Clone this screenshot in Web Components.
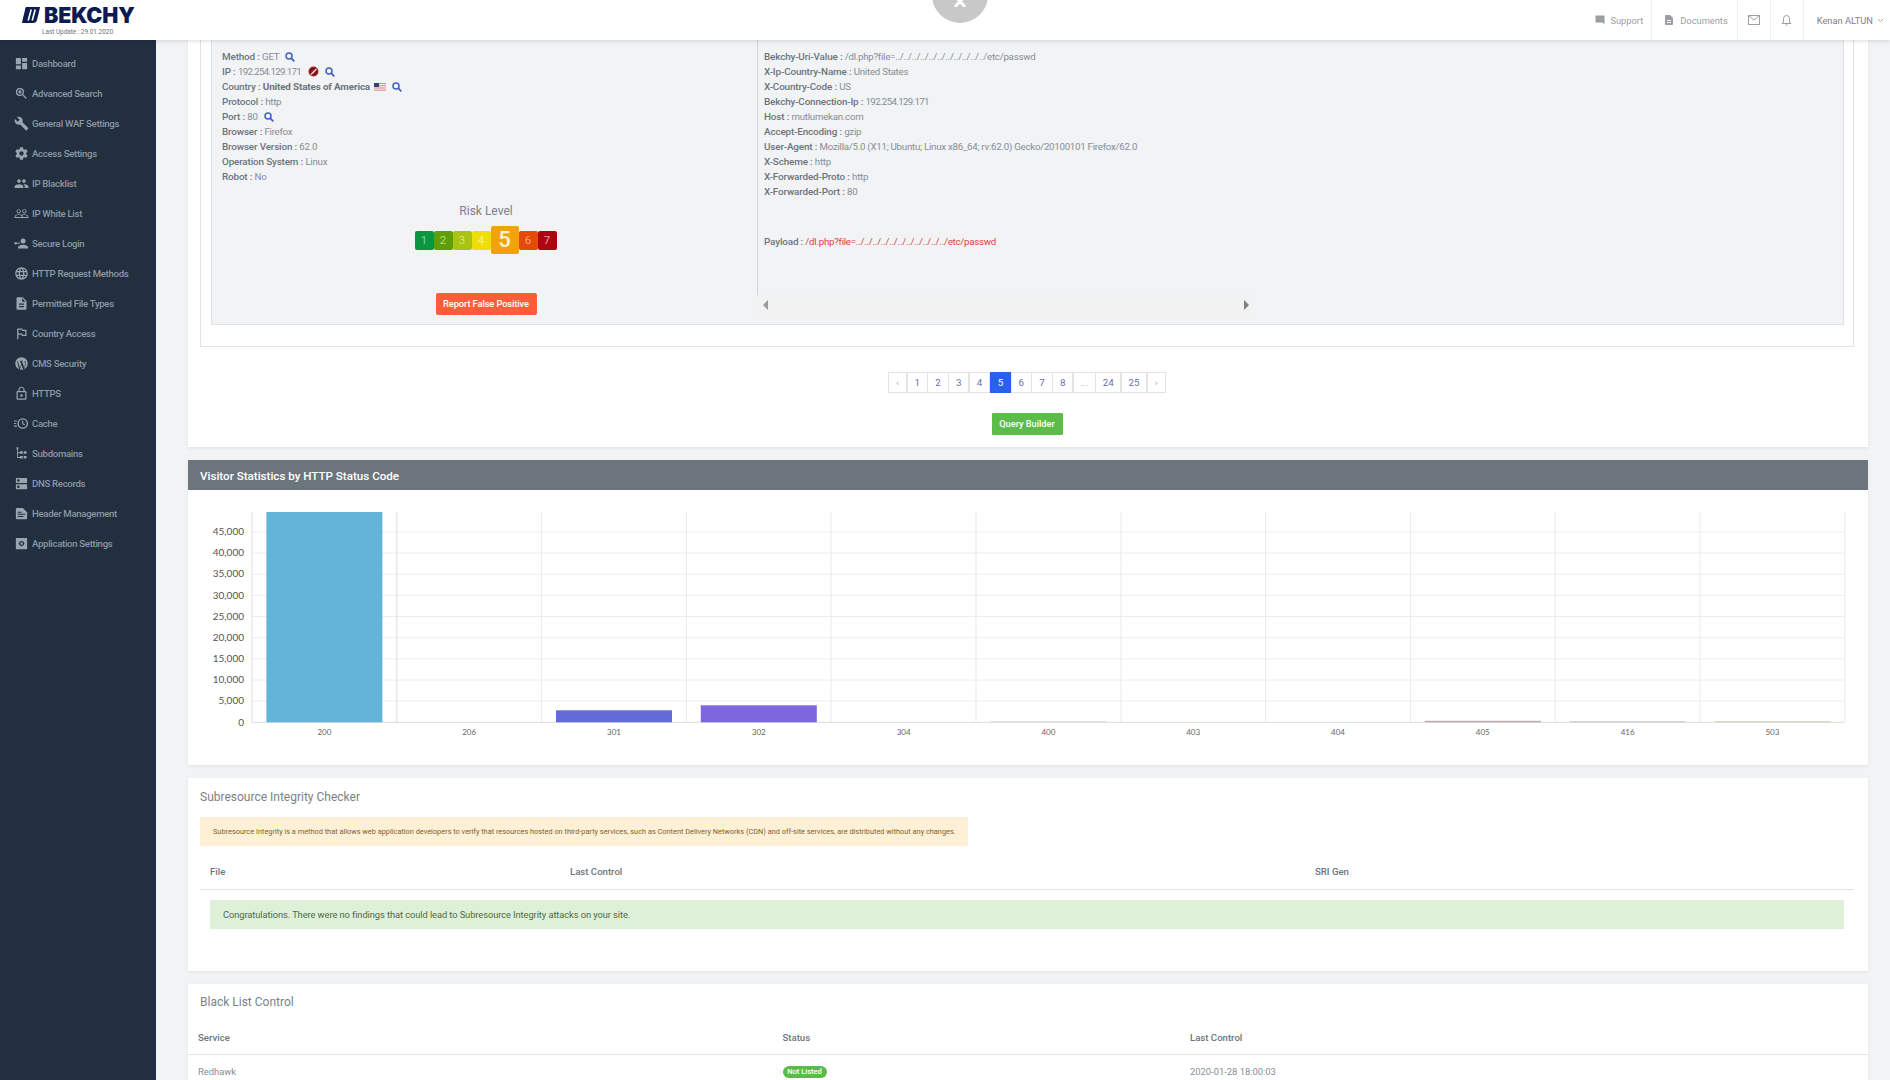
<!DOCTYPE html>
<html lang="en">
<head>
<meta charset="utf-8">
<title>Bekchy</title>
<style>
    html, body { margin: 0; height: 1080px; overflow: hidden; background: #f1f3f5; }
    body { font-family: Roboto, "Liberation Sans", sans-serif; font-size: 10px; color: #6c757d; }
</style>
</head>
<body>
<bk-app>
    <bk-header slot="header"></bk-header>
    <bk-sidebar slot="sidebar">
        <bk-nav icon="dashboard">Dashboard</bk-nav>
        <bk-nav icon="zoom">Advanced Search</bk-nav>
        <bk-nav icon="wrench">General WAF Settings</bk-nav>
        <bk-nav icon="gear">Access Settings</bk-nav>
        <bk-nav icon="people">IP Blacklist</bk-nav>
        <bk-nav icon="peopleo">IP White List</bk-nav>
        <bk-nav icon="keyuser">Secure Login</bk-nav>
        <bk-nav icon="globe">HTTP Request Methods</bk-nav>
        <bk-nav icon="file">Permitted File Types</bk-nav>
        <bk-nav icon="flag">Country Access</bk-nav>
        <bk-nav icon="wp">CMS Security</bk-nav>
        <bk-nav icon="lock">HTTPS</bk-nav>
        <bk-nav icon="cache">Cache</bk-nav>
        <bk-nav icon="tree">Subdomains</bk-nav>
        <bk-nav icon="dns">DNS Records</bk-nav>
        <bk-nav icon="doc">Header Management</bk-nav>
        <bk-nav icon="appgear">Application Settings</bk-nav>
    </bk-sidebar>

    <bk-log-card>
        <bk-row label="Method" value="GET"><bk-mark kind="search"></bk-mark></bk-row>
        <bk-row label="IP" value="192.254.129.171" tight><bk-mark kind="threat"></bk-mark><bk-mark kind="search"></bk-mark></bk-row>
        <bk-row label="Country" value="United States of America" strong><bk-mark kind="flag"></bk-mark><bk-mark kind="search"></bk-mark></bk-row>
        <bk-row label="Protocol" value="http"></bk-row>
        <bk-row label="Port" value="80"><bk-mark kind="search"></bk-mark></bk-row>
        <bk-row label="Browser" value="Firefox"></bk-row>
        <bk-row label="Browser Version" value="62.0"></bk-row>
        <bk-row label="Operation System" value="Linux"></bk-row>
        <bk-row label="Robot" value="No"></bk-row>

        <bk-row slot="headers" label="Bekchy-Uri-Value" value="/dl.php?file=../../../../../../../../../../../etc/passwd"></bk-row>
        <bk-row slot="headers" label="X-Ip-Country-Name" value="United States"></bk-row>
        <bk-row slot="headers" label="X-Country-Code" value="US"></bk-row>
        <bk-row slot="headers" label="Bekchy-Connection-Ip" value="192.254.129.171" tight></bk-row>
        <bk-row slot="headers" label="Host" value="mutlumekan.com"></bk-row>
        <bk-row slot="headers" label="Accept-Encoding" value="gzip"></bk-row>
        <bk-row slot="headers" label="User-Agent" value="Mozilla/5.0 (X11; Ubuntu; Linux x86_64; rv:62.0) Gecko/20100101 Firefox/62.0"></bk-row>
        <bk-row slot="headers" label="X-Scheme" value="http"></bk-row>
        <bk-row slot="headers" label="X-Forwarded-Proto" value="http"></bk-row>
        <bk-row slot="headers" label="X-Forwarded-Port" value="80"></bk-row>
        <bk-row slot="payload" label="Payload" value="/dl.php?file=../../../../../../../../../../../etc/passwd" danger></bk-row>
    </bk-log-card>

    <bk-chart-card title="Visitor Statistics by HTTP Status Code"></bk-chart-card>
    <bk-sri-card></bk-sri-card>
    <bk-blacklist-card></bk-blacklist-card>
</bk-app>

<script>
const ICONS = {
    dashboard: '<path d="M3 13h8V3H3v10zm0 8h8v-6H3v6zm10 0h8V11h-8v10zm0-18v6h8V3h-8z"/>',
    zoom: '<path d="M15.5 14h-.79l-.28-.27A6.471 6.471 0 0 0 16 9.5 6.5 6.5 0 1 0 9.5 16c1.61 0 3.09-.59 4.23-1.57l.27.28v.79l5 4.99L20.49 19l-4.99-5zm-6 0C7.01 14 5 11.99 5 9.5S7.01 5 9.5 5 14 7.01 14 9.5 11.99 14 9.5 14z"/><circle cx="9.5" cy="9.5" r="2.6"/>',
    wrench: '<path d="M22.7 19l-9.1-9.1c.9-2.3.4-5-1.5-6.9-2-2-5-2.4-7.4-1.3L9 6 6 9 1.6 4.7C.4 7.1.9 10.1 2.9 12.1c1.9 1.9 4.6 2.4 6.9 1.5l9.1 9.1c.4.4 1 .4 1.4 0l2.3-2.3c.5-.4.5-1.1.1-1.4z"/>',
    gear: '<path d="M19.43 12.98c.04-.32.07-.64.07-.98s-.03-.66-.07-.98l2.11-1.65c.19-.15.24-.42.12-.64l-2-3.46c-.12-.22-.39-.3-.61-.22l-2.49 1c-.52-.4-1.08-.73-1.69-.98l-.38-2.65C14.46 2.18 14.25 2 14 2h-4c-.25 0-.46.18-.49.42l-.38 2.65c-.61.25-1.17.59-1.69.98l-2.49-1c-.23-.09-.49 0-.61.22l-2 3.46c-.13.22-.07.49.12.64l2.11 1.65c-.04.32-.07.65-.07.98s.03.66.07.98l-2.11 1.65c-.19.15-.24.42-.12.64l2 3.46c.12.22.39.3.61.22l2.49-1c.52.4 1.08.73 1.69.98l.38 2.65c.03.24.24.42.49.42h4c.25 0 .46-.18.49-.42l.38-2.65c.61-.25 1.17-.59 1.69-.98l2.49 1c.23.09.49 0 .61-.22l2-3.46c.12-.22.07-.49-.12-.64l-2.11-1.65zM12 15.5c-1.93 0-3.5-1.57-3.5-3.5s1.57-3.5 3.5-3.5 3.5 1.57 3.5 3.5-1.57 3.5-3.5 3.5z"/>',
    people: '<path d="M16 11c1.66 0 2.99-1.34 2.99-3S17.66 5 16 5c-1.66 0-3 1.34-3 3s1.34 3 3 3zm-8 0c1.66 0 2.99-1.34 2.99-3S9.66 5 8 5C6.34 5 5 6.34 5 8s1.34 3 3 3zm0 2c-2.33 0-7 1.17-7 3.5V19h14v-2.5c0-2.33-4.67-3.5-7-3.5zm8 0c-.29 0-.62.02-.97.05 1.16.84 1.97 1.97 1.97 3.45V19h6v-2.5c0-2.33-4.67-3.5-7-3.5z"/>',
    peopleo: '<path d="M16.5 13c-1.2 0-3.07.34-4.5 1-1.43-.67-3.3-1-4.5-1C5.33 13 1 14.08 1 16.25V19h22v-2.75c0-2.17-4.33-3.25-6.5-3.25zm-4 4.5h-10v-1.25c0-.54 2.56-1.75 5-1.75s5 1.21 5 1.75v1.25zm9 0H14v-1.25c0-.46-.2-.86-.52-1.22.88-.3 1.96-.53 3.02-.53 2.44 0 5 1.21 5 1.75v1.25zM7.5 12c1.93 0 3.5-1.57 3.5-3.5S9.43 5 7.5 5 4 6.57 4 8.5 5.57 12 7.5 12zm0-5.5c1.1 0 2 .9 2 2s-.9 2-2 2-2-.9-2-2 .9-2 2-2zm9 5.5c1.93 0 3.5-1.57 3.5-3.5S18.43 5 16.5 5 13 6.57 13 8.5s1.57 3.5 3.5 3.5zm0-5.5c1.1 0 2 .9 2 2s-.9 2-2 2-2-.9-2-2 .9-2 2-2z"/>',
    keyuser: '<circle cx="14.5" cy="8" r="4"/><path d="M14.5 14c-3 0-8 1.4-8 4v2h16v-2c0-2.6-5-4-8-4z"/><circle cx="2.6" cy="11.5" r="1.9"/><path d="M3 10.7h6.5v1.6H3z"/>',
    globe: '<path d="M11.99 2C6.47 2 2 6.48 2 12s4.47 10 9.99 10C17.52 22 22 17.52 22 12S17.52 2 11.99 2zm6.93 6h-2.95c-.32-1.25-.78-2.45-1.38-3.56 1.84.63 3.37 1.91 4.33 3.56zM12 4.04c.83 1.2 1.48 2.53 1.91 3.96h-3.82c.43-1.43 1.08-2.76 1.91-3.96zM4.26 14C4.1 13.36 4 12.69 4 12s.1-1.36.26-2h3.38c-.08.66-.14 1.32-.14 2 0 .68.06 1.34.14 2H4.26zm.82 2h2.95c.32 1.25.78 2.45 1.38 3.56-1.84-.63-3.37-1.9-4.33-3.56zm2.95-8H5.08c.96-1.66 2.49-2.93 4.33-3.56C8.81 5.55 8.35 6.75 8.03 8zM12 19.96c-.83-1.2-1.48-2.53-1.91-3.96h3.82c-.43 1.43-1.08 2.76-1.91 3.96zM14.34 14H9.66c-.09-.66-.16-1.32-.16-2 0-.68.07-1.35.16-2h4.68c.09.65.16 1.32.16 2 0 .68-.07 1.34-.16 2zm.25 5.56c.6-1.11 1.06-2.31 1.38-3.56h2.95c-.96 1.65-2.49 2.93-4.33 3.56zM16.36 14c.08-.66.14-1.32.14-2 0-.68-.06-1.34-.14-2h3.38c.16.64.26 1.31.26 2s-.1 1.36-.26 2h-3.38z"/>',
    file: '<path d="M14 2H6c-1.1 0-2 .9-2 2v16c0 1.1.9 2 2 2h12c1.1 0 2-.9 2-2V8l-6-6zm2 16H8v-2h8v2zm0-4H8v-2h8v2zm-3-5V3.5L18.5 9H13z"/>',
    flag: '<path d="M14 6l-1-2H5v17h2v-7h5l1 2h7V6h-6zm4 8h-4l-1-2H7V6h5l1 2h5v6z"/>',
    wp: '<path fill-rule="evenodd" d="M12 2a10 10 0 1 0 0 20 10 10 0 0 0 0-20zM6 8.5l3.6 10.2 2-5.4-1.6-4.8H8.9V7.4h5.4v1.1h-1.5l3.5 10.2 1.5-5c.5-1.7-.7-3.3-1.2-4.4-.2-.6.2-1.2.8-1.3 1.400 1.600 1.800 3.500 1.300 5.900l-2.700 7.800h-1.400l-2.600-7.200-2.700 7.200H8.400L4.800 8.500z"/>',
    lock: '<path d="M12 17c1.1 0 2-.9 2-2s-.9-2-2-2-2 .9-2 2 .9 2 2 2zm6-9h-1V6c0-2.76-2.24-5-5-5S7 3.24 7 6v2H6c-1.1 0-2 .9-2 2v10c0 1.1.9 2 2 2h12c1.1 0 2-.9 2-2V10c0-1.1-.9-2-2-2zM8.9 6c0-1.71 1.39-3.1 3.1-3.1s3.1 1.39 3.1 3.1v2H8.9V6zM18 20H6V10h12v10z"/>',
    cache: '<path fill-rule="evenodd" d="M14 3.500a8.500 8.500 0 1 0 0 17 8.500 8.500 0 0 0 0-17zm0 2.200a6.300 6.300 0 1 1 0 12.600 6.300 6.300 0 0 1 0-12.600z"/><path d="M13 7.500h1.800v4.300l3.300 2-.9 1.400-4.200-2.600zM0 7h4.500v1.800H0zM0 11.100h3.500v1.800H0zM0 15.200h4.500V17H0z"/>',
    tree: '<path d="M4 2h3v3H4zM5 5h1.400v14H5zM5 10h5v1.400H5zM5 17.600h5V19H5zM9.500 8.500h4.500v4H9.500zM15.500 8.500H20v4h-4.500zM9.500 16H14v4H9.500zM15.500 16H20v4h-4.500z"/>',
    dns: '<path d="M20 13H4c-.55 0-1 .45-1 1v6c0 .55.45 1 1 1h16c.55 0 1-.45 1-1v-6c0-.55-.45-1-1-1zM7 19c-1.100 0-2-.9-2-2s.9-2 2-2 2 .9 2 2-.9 2-2 2zM20 3H4c-.55 0-1 .45-1 1v6c0 .55.45 1 1 1h16c.55 0 1-.45 1-1V4c0-.55-.45-1-1-1zM7 9c-1.100 0-2-.9-2-2s.9-2 2-2 2 .9 2 2-.9 2-2 2z"/>',
    doc: '<path d="M14 3H5c-1.100 0-2 .9-2 2v14c0 1.100.9 2 2 2h14c1.100 0 2-.9 2-2v-9l-7-7zM6 9h6v1.600H6zm0 3.500h12v1.600H6zm0 3.500h9v1.600H6z"/>',
    appgear: '<path fill-rule="evenodd" d="M3 3h18v18H3zM12 7l1 1.700 2-.3.5 2L17 12l-1.500 1.600-.5 2-2-.3-1 1.700-1-1.700-2 .3-.5-2L7 12l1.500-1.600.5-2 2 .3zm0 3a2 2 0 1 0 0 4 2 2 0 0 0 0-4z"/>',
    chat: '<path d="M21 3H3v14h14l4 4z"/>',
    docs: '<path d="M14 2H6c-1.100 0-2 .9-2 2v16c0 1.100.9 2 2 2h12c1.100 0 2-.9 2-2V8l-6-6zm2 16H8v-2h8v2zm0-4H8v-2h8v2z"/>',
};

function icon(name, size) {
    return `<svg viewBox="0 0 24 24" width="${size}" height="${size}" fill="currentColor" aria-hidden="true">${ICONS[name]}</svg>`;
}

class BkApp extends HTMLElement {
    connectedCallback() {
        this.attachShadow({ mode: 'open' });
        this.shadowRoot.innerHTML = `
            <style>
                :host {
                    display: grid;
                    grid-template-columns: 156px 1fr;
                    grid-template-rows: 40px 1fr;
                    height: 1080px;
                    overflow: hidden;
                }
                .top { grid-column: 1 / 3; position: relative; z-index: 2; }
                .side { min-height: 0; }
                main {
                    min-width: 0;
                    overflow: hidden;
                    padding: 0 22px 0 32px;
                    display: flex;
                    flex-direction: column;
                    gap: 13px;
                }
            </style>
            <div class="top"><slot name="header"></slot></div>
            <div class="side"><slot name="sidebar"></slot></div>
            <main><slot></slot></main>
        `;
    }
}

class BkHeader extends HTMLElement {
    connectedCallback() {
        this.attachShadow({ mode: 'open' });
        this.shadowRoot.innerHTML = `
            <style>
                :host {
                    display: flex;
                    justify-content: space-between;
                    height: 40px;
                    background: #fff;
                    box-shadow: 0 1px 4px rgba(0, 0, 0, .14);
                }
                .brand {
                    width: 156px;
                    display: flex;
                    flex-direction: column;
                    align-items: flex-start;
                    padding: 6px 0 0 22px;
                    box-sizing: border-box;
                }
                .logo { display: flex; align-items: center; gap: 4px; height: 18px; }
                .word {
                    font: 900 21.4px/18px Inter, "Liberation Sans", sans-serif;
                    letter-spacing: -.1px;
                    color: #0c1b52;
                }
                .update { font-size: 6.5px; line-height: 10px; color: #6c757d; margin: 3px 0 0 20px; white-space: nowrap; letter-spacing: -.05px; }
                .drop {
                    position: absolute;
                    left: 932px;
                    top: -33px;
                    width: 56px;
                    height: 56px;
                    border-radius: 50%;
                    background: #c8c8c8;
                }
                .drop svg { position: absolute; left: 19px; top: 32px; }
                .tools { display: flex; align-items: stretch; margin-right: 6px; }
                .tool {
                    display: flex;
                    align-items: center;
                    gap: 5px;
                    padding: 0 9px 0 11px;
                    color: #9a9fa5;
                    font-size: 9.3px;
                    border-left: 1px solid #f1f1f1;
                }
                .tool:first-child { border-left: 0; padding-right: 8px; gap: 4px; }
                .icon-only { padding: 0 10px; width: 12px; justify-content: center; }
                .user { color: #7b8188; padding: 0 0 0 13px; gap: 4px; }
                .chev { width: 7px; height: 5px; color: #aaa; }
            </style>
            <div class="brand">
                <div class="logo">
                    <svg width="18" height="16" viewBox="0 0 18 16">
                        <path d="M4 0h14l-.8 4L15 13a4 4 0 0 1-3.800 3H0l.8-4L3 3a4 4 0 0 1 1-3z" fill="#0c1b52"/>
                        <path d="M6.200 13.500 9.200 2.500M10.200 13.500l3-11" stroke="#fff" stroke-width="1.600" fill="none"/>
                    </svg>
                    <span class="word">BEKCHY</span>
                </div>
                <div class="update">Last Update : 29.01.2020</div>
            </div>
            <div class="drop">
                <svg width="18" height="8" viewBox="0 0 18 8"><path d="M3 -3l6 5 6-5M9 2 4 8M9 2l5 6" stroke="#fff" stroke-width="3" fill="none"/></svg>
            </div>
            <div class="tools">
                <div class="tool">${icon('chat', 12)}<span>Support</span></div>
                <div class="tool">${icon('docs', 12)}<span>Documents</span></div>
                <div class="tool icon-only">
                    <svg width="12" height="10" viewBox="0 0 12 10" fill="none" stroke="currentColor"><rect x=".5" y=".5" width="11" height="9"/><path d="M.5.5 6 5l5.500-4.500"/></svg>
                </div>
                <div class="tool icon-only">
                    <svg width="11" height="12" viewBox="0 0 11 12" fill="none" stroke="currentColor"><path d="M1 9.500h9L8.500 8V4.500a3 3 0 0 0-6 0V8zM4.500 11h2"/></svg>
                </div>
                <div class="tool user"><span>Kenan ALTUN</span>
                    <svg class="chev" viewBox="0 0 7 5" fill="none" stroke="currentColor"><path d="M1 1l2.500 2.500L6 1"/></svg>
                </div>
            </div>
        `;
    }
}

class BkSidebar extends HTMLElement {
    connectedCallback() {
        this.attachShadow({ mode: 'open' });
        this.shadowRoot.innerHTML = `
            <style>
                :host {
                    display: block;
                    height: 1040px;
                    background: #212f3f;
                    padding-top: 8px;
                    box-sizing: border-box;
                }
            </style>
            <slot></slot>
        `;
    }
}

class BkNav extends HTMLElement {
    connectedCallback() {
        this.attachShadow({ mode: 'open' });
        this.shadowRoot.innerHTML = `
            <style>
                :host {
                    display: flex;
                    align-items: center;
                    height: 30px;
                    padding-left: 14px;
                    gap: 3px;
                    font-size: 9.6px;
                    font-weight: 500;
                    letter-spacing: -.3px;
                    color: #8c98a4;
                    white-space: nowrap;
                }
                svg { flex: none; color: #9aa5af; }
            </style>
            ${icon(this.getAttribute('icon'), 15)}<slot></slot>
        `;
    }
}

class BkRow extends HTMLElement {
    connectedCallback() {
        this.attachShadow({ mode: 'open' });
        const cls = ['strong', 'danger', 'tight'].filter(name => this.hasAttribute(name)).join(' ');
        this.shadowRoot.innerHTML = `
            <style>
                :host {
                    display: flex;
                    align-items: center;
                    height: 15px;
                    white-space: nowrap;
                }
                b { font-size: 9.9px; letter-spacing: -.15px; font-weight: 500; color: #6c757d; white-space: pre; }
                span { font-size: 9.7px; letter-spacing: -.25px; color: #868e96; white-space: pre; }
                .strong { font-size: 9.9px; letter-spacing: -.15px; color: #6c757d; font-weight: 700; }
                .danger { color: #e03e3e; }
                .tight { letter-spacing: -.65px; }
                .marks { display: flex; align-items: center; }
            </style>
            <b>${this.getAttribute('label')} : </b><span class="${cls}">${this.getAttribute('value')}</span>
            <div class="marks"><slot></slot></div>
        `;
    }
}

class BkMark extends HTMLElement {
    connectedCallback() {
        this.attachShadow({ mode: 'open' });
        const kind = this.getAttribute('kind');
        let art = '';
        if (kind === 'search') {
            art = '<svg width="10" height="10" viewBox="0 0 10 10" fill="none" stroke="#3f62c0" stroke-width="1.500"><circle cx="4" cy="4" r="3"/><path d="M6.200 6.200 9.300 9.300" stroke-width="1.800"/></svg>';
        } else if (kind === 'threat') {
            art = '<svg width="11" height="11" viewBox="0 0 11 11"><circle cx="5.500" cy="5.500" r="5" fill="#a81f26"/><circle cx="5.500" cy="5.500" r="3" fill="none" stroke="#30141a" stroke-width="1"/><path d="M3 8.500 8.500 3" stroke="#f3dcdc" stroke-width="1.200"/></svg>';
        } else {
            art = '<svg width="12" height="8" viewBox="0 0 12 8"><rect width="12" height="8" fill="#f4f4f4"/><path d="M0 .6h12M0 2.800h12M0 5h12M0 7.200h12" stroke="#d7808a" stroke-width="1"/><rect width="5" height="4" fill="#3c3f73"/></svg>';
        }
        this.shadowRoot.innerHTML = `
            <style>
                :host { display: inline-flex; margin-left: ${kind === 'search' ? 6 : kind === 'flag' ? 4 : 7}px; }
            </style>
            ${art}
        `;
    }
}

class BkRisk extends HTMLElement {
    connectedCallback() {
        this.attachShadow({ mode: 'open' });
        const levels = [
            ['#0a9640', '#7fd3a0'], ['#5f9e07', '#b5dd6e'], ['#a9c312', '#d5e36e'], ['#eedf0c', '#f7ef75'],
            ['#f0a30a', '#fff4d9'], ['#e64a08', '#f7a26f'], ['#ab0611', '#f09aa0'],
        ];
        const active = Number(this.getAttribute('level'));
        this.shadowRoot.innerHTML = `
            <style>
                :host { display: flex; align-items: center; justify-content: center; }
                div {
                    width: 19px;
                    height: 19px;
                    line-height: 19px;
                    text-align: center;
                    font-size: 11.5px;
                    border-radius: 2px;
                }
                .on { width: 28px; height: 28px; line-height: 28px; font-size: 22px; font-weight: 500; }
            </style>
            ${levels.map((c, i) => `<div class="${i + 1 === active ? 'on' : ''}" style="background:${c[0]};color:${c[1]}">${i + 1}</div>`).join('')}
        `;
    }
}

class BkPager extends HTMLElement {
    connectedCallback() {
        this.attachShadow({ mode: 'open' });
        const pages = ['‹', '1', '2', '3', '4', '5', '6', '7', '8', '...', '24', '25', '›'];
        this.shadowRoot.innerHTML = `
            <style>
                :host { display: flex; justify-content: center; }
                a {
                    box-sizing: border-box;
                    height: 21px;
                    min-width: 21.200px;
                    padding: 0 6.500px;
                    display: flex;
                    align-items: center;
                    justify-content: center;
                    font-size: 9.8px;
                    color: #6a6fae;
                    border: 1px solid #e2e5e8;
                    margin-left: -.4px;
                }
                a.muted { color: #a5aab0; min-width: 19.200px; }
                a.on { background: #2962ea; border-color: #2962ea; color: #fff; }
            </style>
            ${pages.map(p => `<a class="${p === '5' ? 'on' : /[‹›.]/.test(p) ? 'muted' : ''}">${p}</a>`).join('')}
        `;
    }
}

class BkLogCard extends HTMLElement {
    connectedCallback() {
        this.attachShadow({ mode: 'open' });
        this.shadowRoot.innerHTML = `
            <style>
                :host {
                    display: block;
                    flex: none;
                    background: #fff;
                    padding: 0 14px 0 12px;
                    box-shadow: 0 1px 3px rgba(0, 0, 0, .08);
                }
                .outline {
                    border: 1px solid #e1e4e7;
                    border-top: 0;
                    padding: 0 9px 21px 10px;
                }
                .box {
                    display: flex;
                    height: 285px;
                    background: #f1f3f5;
                    border: 1px solid #dee2e6;
                    border-top: 0;
                    box-sizing: border-box;
                }
                .left {
                    width: 545px;
                    flex: none;
                    box-sizing: border-box;
                    padding: 9px 0 0 10px;
                    display: flex;
                    flex-direction: column;
                }
                .risk-title { align-self: center; font-size: 12px; line-height: 16px; margin: 19px 0 7px -7px; color: #7a828a; }
                bk-risk { margin-left: -8px; }
                .report {
                    align-self: center;
                    margin: 39px 0 0 -7px;
                    width: 101px;
                    height: 22px;
                    line-height: 22px;
                    text-align: center;
                    background: #ff5c39;
                    color: #fff;
                    font-size: 9.3px;
                    letter-spacing: -.1px;
                    font-weight: 500;
                    border-radius: 2px;
                }
                .right { flex: 1; display: flex; flex-direction: column; min-width: 0; }
                .rows {
                    height: 255px;
                    box-sizing: border-box;
                    border-left: 1px solid #ced4da;
                    padding: 9px 0 0 6px;
                }
                .payload { margin-top: 35px; }
                .scroll {
                    width: 498px;
                    height: 20px;
                    background: #f2f2f2;
                    display: flex;
                    justify-content: space-between;
                    align-items: center;
                    padding: 0 6px;
                    box-sizing: border-box;
                }
                .scroll i { width: 0; height: 0; border: 5px solid transparent; border-left-width: 0; border-right-color: #9a9a9a; }
                .scroll i + i { border-left-width: 5px; border-right-width: 0; border-left-color: #7f7f7f; }
                .foot {
                    display: flex;
                    flex-direction: column;
                    align-items: center;
                    padding: 25px 0 12px;
                    gap: 20px;
                }
                .builder {
                    width: 71px;
                    height: 22px;
                    line-height: 22px;
                    text-align: center;
                    background: #5bbd47;
                    color: #fff;
                    font-size: 9.2px;
                    font-weight: 500;
                    border-radius: 1px;
                }
                bk-pager { align-self: stretch; }
            </style>
            <div class="outline">
                <div class="box">
                    <div class="left">
                        <slot></slot>
                        <div class="risk-title">Risk Level</div>
                        <bk-risk level="5"></bk-risk>
                        <div class="report">Report False Positive</div>
                    </div>
                    <div class="right">
                        <div class="rows">
                            <slot name="headers"></slot>
                            <div class="payload"><slot name="payload"></slot></div>
                        </div>
                        <div class="scroll"><i></i><i></i></div>
                    </div>
                </div>
            </div>
            <div class="foot">
                <bk-pager></bk-pager>
                <div class="builder">Query Builder</div>
            </div>
        `;
    }
}

class BkChartCard extends HTMLElement {
    connectedCallback() {
        this.attachShadow({ mode: 'open' });
        // svg origin is the top left of the chart body, so x = page x - 188, y = page y - 490
        const left = 64, step = 144.8, base = 232.3, unit = 21.15, top = 22;
        const codes = ['200', '206', '301', '302', '304', '400', '403', '404', '405', '416', '503'];
        const bars = { 0: [210.3, '#63b4d9'], 2: [12, '#636bd6'], 3: [17, '#7e66dc'], 5: [1, '#d6d6d6'], 8: [1.500, '#b7adad'], 9: [1, '#c4c4c4'], 10: [1, '#d0ccbc'] };
        let art = '';
        for (let i = 1; i <= 9; i++) {
            const y = base - unit * i;
            art += `<line x1="${left}" x2="${left + step * 11}" y1="${y}" y2="${y}" stroke="#ececec"/>`;
        }
        for (let i = 0; i <= 11; i++) {
            const x = left + step * i;
            art += `<line x1="${x}" x2="${x}" y1="${top}" y2="${base}" stroke="${i === 0 || i === 1 ? '#dedede' : '#ebebeb'}"/>`;
        }
        art += `<line x1="${left}" x2="${left + step * 11}" y1="${base}" y2="${base}" stroke="#dcdcdc"/>`;
        for (let i = 0; i <= 9; i++) {
            art += `<text x="56" y="${base - unit * i + 3.200}" text-anchor="end" class="y">${(i * 5000).toLocaleString('en-US')}</text>`;
        }
        codes.forEach((code, i) => {
            const cx = left + step * (i + .5);
            if (bars[i]) art += `<rect x="${cx - 58}" y="${base - bars[i][0]}" width="116" height="${bars[i][0]}" fill="${bars[i][1]}"/>`;
            art += `<text x="${cx}" y="245" text-anchor="middle" class="x">${code}</text>`;
        });
        this.shadowRoot.innerHTML = `
            <style>
                :host {
                    display: block;
                    flex: none;
                    height: 305px;
                    background: #fff;
                    box-shadow: 0 1px 3px rgba(0, 0, 0, .08);
                }
                h2 {
                    margin: 0;
                    height: 30px;
                    line-height: 32px;
                    padding-left: 12px;
                    background: #6c757d;
                    color: #fff;
                    font-size: 11.6px;
                    font-weight: 500;
                }
                svg { display: block; }
                .y { font: 10px Lato, "Liberation Sans", sans-serif; fill: #555; }
                .x { font: 8px Lato, "Liberation Sans", sans-serif; fill: #666; }
            </style>
            <h2>${this.getAttribute('title')}</h2>
            <svg width="1680" height="275" viewBox="0 0 1680 275">${art}</svg>
        `;
    }
}

class BkSriCard extends HTMLElement {
    connectedCallback() {
        this.attachShadow({ mode: 'open' });
        this.shadowRoot.innerHTML = `
            <style>
                :host {
                    display: block;
                    flex: none;
                    height: 193px;
                    box-sizing: border-box;
                    padding: 11px 14px 0 12px;
                    background: #fff;
                    box-shadow: 0 1px 3px rgba(0, 0, 0, .08);
                }
                h3 { margin: 0; font-size: 12px; line-height: 16px; font-weight: 400; color: #7a828a; }
                .warn {
                    width: 768px;
                    height: 29px;
                    box-sizing: border-box;
                    margin-top: 12px;
                    padding-left: 13px;
                    line-height: 29px;
                    background: #fdf0d5;
                    color: #7d6232;
                    font-size: 7.37px;
                    white-space: nowrap;
                }
                .head {
                    display: grid;
                    grid-template-columns: 360px 745px 1fr;
                    height: 44px;
                    box-sizing: border-box;
                    padding: 18px 0 0 10px;
                    line-height: 16px;
                    border-bottom: 1px solid #dee2e6;
                    font-weight: 500;
                    font-size: 9.6px;
                }
                .ok {
                    margin: 10px 10px 0;
                    height: 29px;
                    line-height: 29px;
                    padding-left: 13px;
                    background: #dff0d8;
                    color: #4d6b45;
                    font-size: 9.3px;
                    letter-spacing: -.07px;
                }
            </style>
            <h3>Subresource Integrity Checker</h3>
            <div class="warn">Subresource Integrity is a method that allows web application developers to verify that resources hosted on third-party services, such as Content Delivery Networks (CDN) and off-site services, are distributed without any changes.</div>
            <div class="head"><span>File</span><span>Last Control</span><span>SRI Gen</span></div>
            <div class="ok">Congratulations. There were no findings that could lead to Subresource Integrity attacks on your site.</div>
        `;
    }
}

class BkBlacklistCard extends HTMLElement {
    connectedCallback() {
        this.attachShadow({ mode: 'open' });
        this.shadowRoot.innerHTML = `
            <style>
                :host {
                    display: block;
                    flex: none;
                    height: 200px;
                    box-sizing: border-box;
                    padding-top: 10px;
                    background: #fff;
                    box-shadow: 0 1px 3px rgba(0, 0, 0, .08);
                }
                h3 { margin: 0 0 0 12px; font-size: 12px; line-height: 16px; font-weight: 400; color: #7a828a; }
                .grid { display: grid; grid-template-columns: 584.500px 407.500px 1fr; padding-left: 10px; }
                .head {
                    height: 45px;
                    box-sizing: border-box;
                    padding-top: 20px;
                    line-height: 16px;
                    border-bottom: 1px solid #dee2e6;
                    font-weight: 500;
                    font-size: 9.6px;
                }
                .row { height: 33px; align-items: center; color: #868e96; font-size: 9.4px; }
                .badge {
                    display: inline-block;
                    width: 44px;
                    height: 12px;
                    line-height: 12px;
                    text-align: center;
                    border-radius: 6px;
                    background: #5bbd47;
                    color: #fff;
                    font-size: 7.5px;
                    font-weight: 500;
                }
            </style>
            <h3>Black List Control</h3>
            <div class="grid head"><span>Service</span><span>Status</span><span>Last Control</span></div>
            <div class="grid row"><span>Redhawk</span><span><span class="badge">Not Listed</span></span><span>2020-01-28 18:00:03</span></div>
        `;
    }
}

customElements.define('bk-app', BkApp);
customElements.define('bk-header', BkHeader);
customElements.define('bk-sidebar', BkSidebar);
customElements.define('bk-nav', BkNav);
customElements.define('bk-row', BkRow);
customElements.define('bk-mark', BkMark);
customElements.define('bk-risk', BkRisk);
customElements.define('bk-pager', BkPager);
customElements.define('bk-log-card', BkLogCard);
customElements.define('bk-chart-card', BkChartCard);
customElements.define('bk-sri-card', BkSriCard);
customElements.define('bk-blacklist-card', BkBlacklistCard);
</script>
</body>
</html>
